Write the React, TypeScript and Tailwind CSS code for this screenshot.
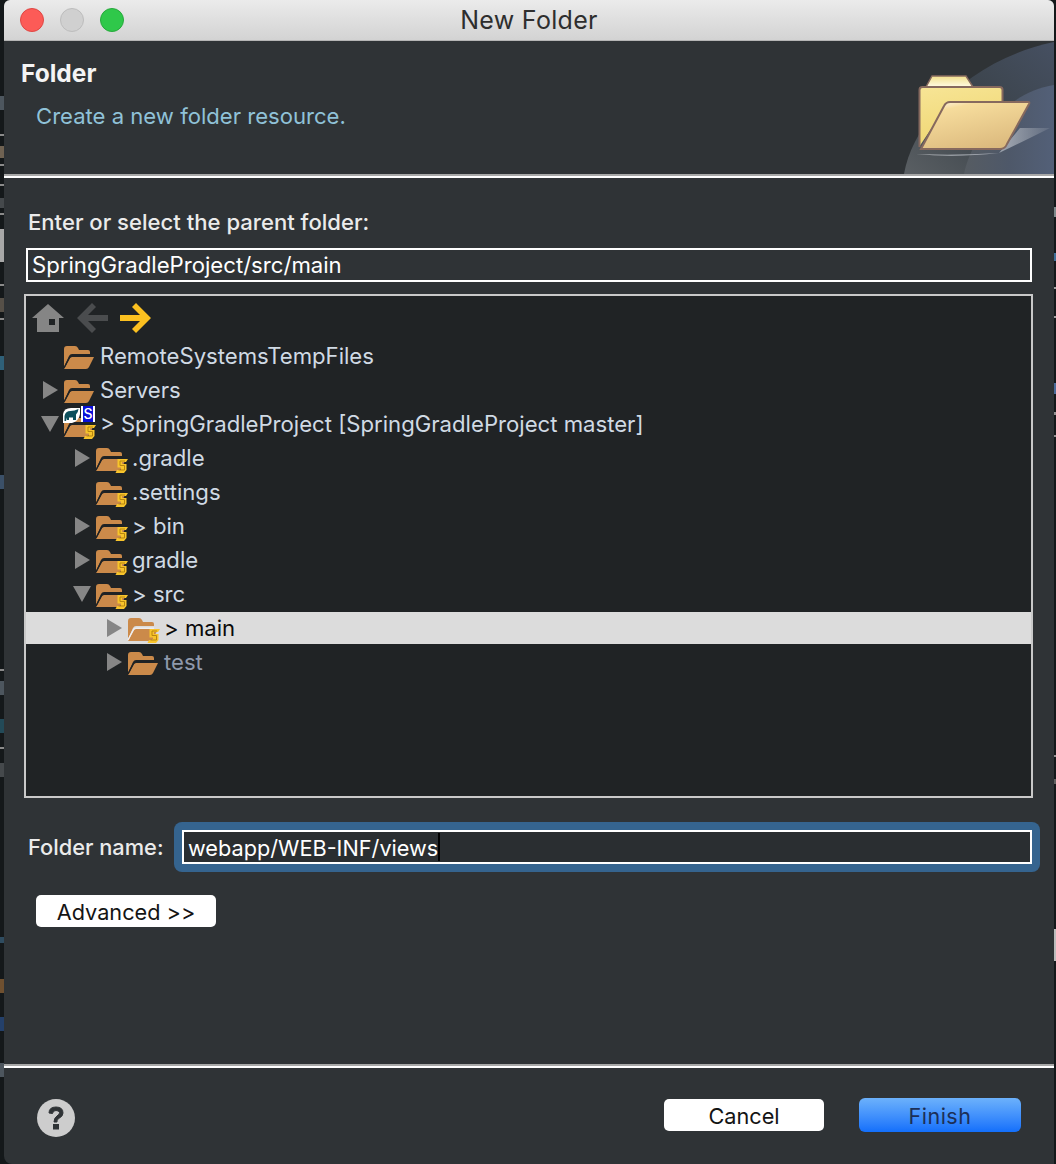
const font = "[font-family:Inter,'Liberation_Sans',sans-serif]";

function FolderIcon({ light = false }: { light?: boolean }) {
  const cut = light ? "#f0eeee" : "#202325";
  return (
    <svg width="32" height="25" viewBox="0 0 32 25" className="shrink-0">
      <path d="M1 22V4q0-3 3-3h8q2 0 3 2l1 2h9q2 0 2 2v2H9q-2 0-3 2z" fill="#cb8a4a" />
      <path d="M1 24 7 13q1-1 2-1h22l-5 10q-1 2-3 2H2z" fill="#cb8a4a" />
      <path d="M1 23 6.500 12.500Q7 11.200 9 11.200h18" fill="none" stroke={cut} strokeWidth="1.400" />
    </svg>
  );
}

function Badge() {
  return (
    <svg width="13" height="16" viewBox="0 0 13 16" className="absolute left-[20px] top-[14px]">
      <path d="M2.500 1H13L11 4H7v2h4.500v6L9 15H0.500L2 12h4V9.500H2.500z" fill="#f8c42c" />
      <path d="M10 3H5v4.500h4.500V12H3.500" fill="none" stroke="#b8860f" strokeWidth="1" />
    </svg>
  );
}

function Arrow({ state }: { state: "none" | "right" | "down" }) {
  return (
    <span className="w-[20px] h-[20px] shrink-0 flex items-center justify-center mr-[3px]">
      {state === "right" && (
        <svg width="15" height="20" viewBox="0 0 15 20"><path d="M0 1 15 10 0 19z" fill="#868686" /></svg>
      )}
      {state === "down" && (
        <svg width="20" height="16" viewBox="0 0 20 16"><path d="M1 0H19L10 16z" fill="#868686" /></svg>
      )}
    </span>
  );
}

function Row({
  level, arrow, label, badge = true, selected = false, muted = false, project = false,
}: {
  level: number; arrow: "none" | "right" | "down"; label: string; badge?: boolean; selected?: boolean; muted?: boolean; project?: boolean;
}) {
  const pad = ["pl-[14px]", "pl-[46px]", "pl-[78px]"][level];
  const color = selected ? "text-[#0a0a0a]" : muted ? "text-[#8f99ab]" : "text-[#d0dae4]";
  return (
    <div className="h-[34px] py-px">
      <div className={`h-[32px] flex items-center ${pad} ${selected ? "bg-[#dcdcdc]" : ""}`}>
        <Arrow state={arrow} />
        <span className="relative w-[32px] h-[28px] flex items-end shrink-0 mr-[5px]">
          <FolderIcon light={selected} />
          {project && (
            <>
              <svg width="17" height="15" viewBox="0 0 17 15" className="absolute left-0 top-[-2px]">
                <path d="M0 15V6q1-6 8-6h9v6q-1 7-8 9z" fill="#fff" />
                <path d="M1.500 13V8q1-5 6-5 4 0 8-2-.5 4-2.500 5.500V12h-3V9.500H6V12H4V9.500L3 13z" fill="#0d4f5c" />
              </svg>
              <span className="absolute left-[18px] top-[-4px] w-[14px] h-[16px] bg-white flex items-center justify-center">
                <span className="w-[10px] h-[16px] bg-[#0a10d8] text-white text-[14px] leading-[16px] font-medium text-center">S</span>
              </span>
            </>
          )}
          {badge && <Badge />}
        </span>
        <span className={`text-[22.150px] leading-[32px] whitespace-nowrap ${color}`}>{label}</span>
      </div>
    </div>
  );
}

function Rule() {
  return (
    <div className="shrink-0">
      <div className="h-[2px] bg-[#a8a8a8]" />
      <div className="h-[2px] bg-white" />
    </div>
  );
}

function BigFolder() {
  return (
    <svg width="150" height="133" viewBox="0 0 150 133" className="absolute right-0 top-0">
      <defs>
        <linearGradient id="fa" x1="0" y1="1" x2="1" y2="0">
          <stop offset="0" stopColor="#5a5f63" />
          <stop offset="0.500" stopColor="#3b434a" />
          <stop offset="1" stopColor="#465062" />
        </linearGradient>
        <linearGradient id="fb" x1="0" y1="0" x2="1" y2="0">
          <stop offset="0" stopColor="#565c62" />
          <stop offset="0.500" stopColor="#4e5869" />
          <stop offset="1" stopColor="#536078" />
        </linearGradient>
        <linearGradient id="fc" x1="0" y1="0" x2="0.300" y2="1">
          <stop offset="0" stopColor="#f7e596" />
          <stop offset="1" stopColor="#efd672" />
        </linearGradient>
        <linearGradient id="fd" x1="0.100" y1="0" x2="0.600" y2="1">
          <stop offset="0" stopColor="#fff8ea" />
          <stop offset="0.180" stopColor="#f6dc9c" />
          <stop offset="1" stopColor="#dcba7e" />
        </linearGradient>
        <linearGradient id="fe" x1="0" y1="0" x2="0" y2="1">
          <stop offset="0" stopColor="#f2e08c" />
          <stop offset="1" stopColor="#fffbe4" />
        </linearGradient>
        <linearGradient id="ff" x1="0" y1="0" x2="1" y2="0">
          <stop offset="0" stopColor="#d8dade" />
          <stop offset="0.700" stopColor="#aab0ba" />
          <stop offset="1" stopColor="#aab0ba" stopOpacity="0.200" />
        </linearGradient>
      </defs>
      <path d="M0 133C8 85 60 20 150 1V133z" fill="url(#fa)" />
      <path d="M60 133C66 100 100 52 150 44V133z" fill="url(#fb)" />
      <path d="M12 113Q50 115 95 112L116 87H146Q110 105 95 112Q50 117 12 113z" fill="url(#ff)" opacity="0.800" />
      <path d="M22 46 28 35H62L69 46z" fill="url(#fe)" stroke="#86695e" strokeWidth="1.500" />
      <path d="M15 106V49q0-3 3-3h78q3 0 3 3v12H45z" fill="url(#fc)" />
      <path d="M15.500 106V49q0-3 3-3h77q3 0 3 3v11" fill="none" stroke="#86695e" strokeWidth="2" />
      <path d="M17 108 40 65q2-4 6-4h78q2 0 1 2l-22 40q-2 5-7 5z" fill="url(#fd)" stroke="#86695e" strokeWidth="2" />
    </svg>
  );
}

const leftMarks: [number, string][] = [
  [96, "#14181a"], [14, "#4d565e"], [24, "#14181a"], [2, "#8a8a8a"], [10, "#14181a"], [12, "#6f6252"], [6, "#14181a"],
  [2, "#8a8a8a"], [18, "#14181a"], [2, "#8a8a8a"], [12, "#14181a"], [10, "#45494c"], [5, "#14181a"], [2, "#8a8a8a"],
  [14, "#14181a"], [33, "#a8a8a8"], [22, "#14181a"], [2, "#8a8a8a"], [12, "#14181a"], [14, "#565048"], [6, "#14181a"],
  [2, "#8a8a8a"], [36, "#14181a"], [14, "#2f6078"], [105, "#14181a"], [14, "#3b5068"], [180, "#14181a"], [2, "#8a8a8a"],
  [10, "#14181a"], [14, "#4d565e"], [24, "#14181a"], [14, "#234a58"], [14, "#14181a"], [2, "#8a8a8a"], [14, "#14181a"],
  [14, "#45494c"], [160, "#14181a"], [6, "#2f4c60"], [36, "#14181a"], [14, "#6f5030"], [24, "#14181a"], [14, "#24406a"],
  [32, "#14181a"], [14, "#4d565e"],
];

const rightMarks: [number, string][] = [
  [207, "#14181a"], [10, "#7f8a8c"], [36, "#14181a"], [8, "#3f6f98"], [26, "#14181a"], [2, "#a0a0a0"], [27, "#14181a"],
  [2, "#a0a0a0"], [65, "#14181a"], [11, "#4a6a98"], [18, "#14181a"], [3, "#909090"], [20, "#14181a"], [2, "#909090"],
  [318, "#14181a"], [2, "#909090"], [22, "#14181a"], [5, "#606060"], [145, "#14181a"], [32, "#bcbcbc"],
];

function Strip({ side }: { side: "left" | "right" }) {
  const marks = side === "left" ? leftMarks : rightMarks;
  return (
    <div className={`shrink-0 bg-[#14181a] ${side === "left" ? "w-[4px]" : "w-[2px]"}`}>
      {marks.map(([h, c], i) => (
        <div key={i} style={{ height: h, backgroundColor: c }} />
      ))}
    </div>
  );
}

export default function App() {
  return (
    <div className={`w-[1056px] h-[1164px] flex overflow-hidden bg-[#14181a] ${font}`}>
      <Strip side="left" />
      <div className="flex-1 flex flex-col min-w-0 bg-[#2f3336] rounded-bl-[8px] rounded-t-[6px] overflow-hidden">
        <div className="h-[41px] shrink-0 relative flex items-center justify-center bg-gradient-to-b from-[#ebebeb] to-[#d3d3d3] border-b border-[#b5b5b5]">
          <div className="absolute left-[16px] top-[8px] flex gap-[16px]">
            <span className="w-[24px] h-[24px] rounded-full bg-[#fc5b57] border border-[#df4744]" />
            <span className="w-[24px] h-[24px] rounded-full bg-[#d0d0d0] border border-[#bdbdbd]" />
            <span className="w-[24px] h-[24px] rounded-full bg-[#2fc84a] border border-[#27a93c]" />
          </div>
          <span className="text-[25px] leading-[41px] text-[#2e2e2e] tracking-[0.300px]">New Folder</span>
        </div>

        <div className="h-[133px] shrink-0 relative pl-[17px] pt-[17px]">
          <div className="text-[24.500px] leading-[30px] font-bold text-[#f4f4f4]">Folder</div>
          <div className="text-[22.100px] leading-[30px] text-[#90c2d8] pl-[15px] mt-[13px]">Create a new folder resource.</div>
          <BigFolder />
        </div>
        <Rule />

        <div className="flex-1 min-h-0 flex flex-col pl-[20px] pr-[21px] pt-[29px]">
          <div className="text-[22.100px] font-medium leading-[30px] text-[#ebebeb] pl-[4px]">Enter or select the parent folder:</div>
          <div className="mt-[11px] h-[34px] ml-[2px] mr-[1px] border-2 border-white flex items-center pl-[4px] pt-[2px] text-[22.150px] text-white">SpringGradleProject/src/main</div>
          <div className="mt-[12px] h-[504px] border-2 border-[#c9c9c9] bg-[#202325]">
            <div className="h-[43px] flex items-center pl-[6px] gap-[12px]">
              <svg width="32" height="28" viewBox="0 0 32 28">
                <path d="M16 0 32 14H27V28H5V14H0z" fill="#858585" />
                <path d="M17 15h6v6h-6z" fill="#202325" />
              </svg>
              <svg width="32" height="32" viewBox="0 0 32 32">
                <path d="M16 1 1 16 16 31 20 27 12 19H32V13H12L20 5z" fill="#4a4c4e" />
              </svg>
              <svg width="32" height="32" viewBox="0 0 32 32">
                <path d="M16 1 31 16 16 31 12 27 20 19H0V13H20L12 5z" fill="#fbc020" />
              </svg>
            </div>
            <Row level={0} arrow="none" label="RemoteSystemsTempFiles" badge={false} />
            <Row level={0} arrow="right" label="Servers" badge={false} />
            <Row level={0} arrow="down" label="> SpringGradleProject [SpringGradleProject master]" project />
            <Row level={1} arrow="right" label=".gradle" />
            <Row level={1} arrow="none" label=".settings" />
            <Row level={1} arrow="right" label="> bin" />
            <Row level={1} arrow="right" label="gradle" />
            <Row level={1} arrow="down" label="> src" />
            <Row level={2} arrow="right" label="> main" selected />
            <Row level={2} arrow="right" label="test" badge={false} muted />
          </div>

          <div className="mt-[24px] flex items-center h-[50px]">
            <span className="w-[150px] shrink-0 pl-[4px] text-[21.800px] font-medium text-[#ebebeb]">Folder name:</span>
            <div className="flex-1 -mr-[7px] h-[50px] rounded-[8px] bg-[#35648f] p-[8px]">
              <div className="h-[34px] border-2 border-white bg-[#2a2e31] flex items-center pl-[4px] pt-[2px] text-[21.700px] text-white">
                <span>webapp/WEB-INF/views</span>
                <span className="w-[2px] h-[28px] -mt-[2px] bg-black" />
              </div>
            </div>
          </div>

          <button className="mt-[23px] ml-[12px] w-[180px] h-[32px] rounded-[5px] bg-white text-[21.700px] text-[#141414] leading-[34px]">Advanced &gt;&gt;</button>
        </div>

        <Rule />
        <div className="h-[96px] shrink-0 flex items-center pl-[32px] pr-[33px]">
          <svg width="40" height="40" viewBox="0 0 40 40" className="mt-[4px]">
            <circle cx="20" cy="20" r="19" fill="#cdcdcd" />
            <path d="M13 15q0-6 7-6t7 6q0 3-3.500 5T21 24h-3q0-4 3-6t2.500-3.500Q23 12.500 20 12.500q-3 0-3.500 3z" fill="#2f3336" stroke="#2f3336" strokeWidth="1" />
            <rect x="17" y="26" width="6" height="5.500" fill="#2f3336" />
          </svg>
          <div className="ml-auto flex items-center gap-[35px] -mt-[2px]">
            <button className="w-[160px] h-[32px] rounded-[5px] bg-white text-[21.700px] text-[#141414] leading-[34px]">Cancel</button>
            <button className="w-[162px] h-[34px] rounded-[6px] bg-gradient-to-b from-[#6cb1fb] to-[#126ffb] text-[21.500px] text-[#1c2f57] leading-[36px] tracking-[0.500px]">Finish</button>
          </div>
        </div>
      </div>
      <Strip side="right" />
    </div>
  );
}
